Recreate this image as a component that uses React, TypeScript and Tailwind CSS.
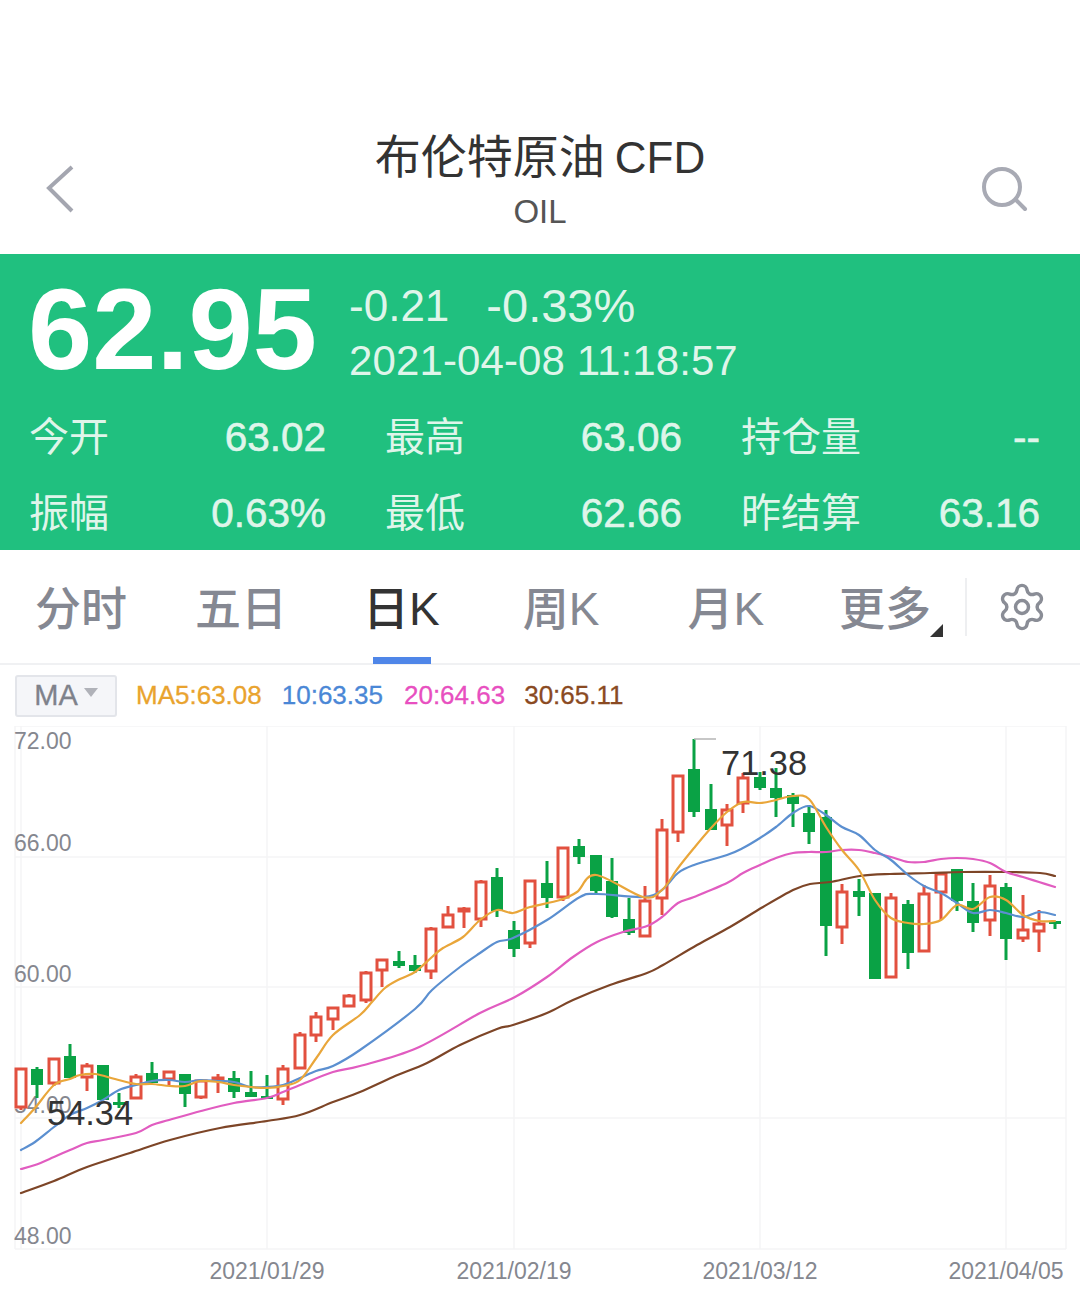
import { Settings } from "lucide-react";

type Candle = [number, number, number, number, number];

// x, body top, body bottom, wick top, wick bottom
const redCandles: Candle[] = [
  [21, 1069, 1107, 1068, 1110], [54, 1059, 1083, 1059, 1086], [87, 1066, 1077, 1063, 1091],
  [136, 1077, 1098, 1074, 1099], [169, 1072, 1079, 1072, 1086], [201, 1081, 1097, 1081, 1099],
  [218, 1078, 1080, 1074, 1093], [283, 1069, 1099, 1065, 1105], [300, 1035, 1068, 1032, 1068],
  [316, 1017, 1035, 1012, 1042], [333, 1008, 1019, 1008, 1030], [349, 996, 1006, 994, 1007],
  [366, 973, 1000, 971, 1003], [382, 960, 970, 960, 987], [431, 929, 971, 927, 979],
  [448, 915, 927, 906, 927], [464, 909, 911, 907, 928], [481, 882, 919, 880, 927],
  [530, 881, 943, 880, 948], [563, 848, 897, 848, 901], [645, 901, 936, 886, 936],
  [662, 830, 898, 819, 915], [678, 776, 832, 776, 842], [727, 810, 825, 804, 846],
  [743, 778, 803, 773, 813], [842, 892, 927, 884, 944], [891, 898, 977, 893, 977],
  [924, 894, 951, 885, 951], [941, 874, 892, 872, 920], [990, 886, 920, 875, 936],
  [1023, 930, 938, 895, 942], [1039, 924, 931, 910, 952],
];

const greenCandles: Candle[] = [
  [37, 1069, 1085, 1067, 1098], [70, 1056, 1078, 1044, 1078], [103, 1065, 1100, 1065, 1100],
  [119, 1102, 1104, 1093, 1108], [152, 1073, 1083, 1062, 1083], [185, 1074, 1094, 1074, 1107],
  [234, 1078, 1092, 1071, 1098], [251, 1092, 1097, 1071, 1097], [267, 1096, 1097, 1075, 1098],
  [399, 961, 966, 951, 968], [415, 965, 971, 955, 973], [497, 877, 911, 868, 917],
  [514, 930, 949, 921, 957], [547, 883, 898, 861, 908], [579, 846, 857, 839, 864],
  [596, 855, 891, 855, 894], [612, 881, 917, 858, 918], [629, 919, 933, 898, 935],
  [694, 769, 812, 739, 817], [711, 809, 830, 784, 830], [760, 777, 788, 772, 790],
  [776, 788, 798, 768, 817], [793, 795, 804, 793, 827], [809, 813, 832, 805, 844],
  [826, 817, 926, 810, 956], [859, 891, 897, 879, 916], [875, 893, 979, 893, 979],
  [908, 904, 953, 900, 969], [957, 869, 901, 869, 911], [973, 901, 923, 883, 932],
  [1006, 887, 939, 883, 960], [1055, 921, 923, 921, 929],
];

const ma5 = "21,1123 35,1108 54,1085 70,1079 80,1075 95,1074 115,1079 136,1084 152,1084 170,1086 185,1086 200,1081 218,1082 234,1085 251,1087 267,1088 283,1086 300,1080 317,1057 333,1035 360,1015 372,1002 385,988 400,979 415,972 432,957 443,948 463,937 480,920 497,910 513,913 530,907 560,900 577,892 596,875 643,897 662,890 678,868 694,848 711,828 727,812 743,802 760,803 776,800 793,796 809,799 826,827 842,850 859,870 875,900 891,918 908,923 924,924 941,920 957,905 973,909 990,897 1006,900 1023,915 1039,921 1055,921";
const ma10 = "21,1150 35,1142 54,1127 70,1115 87,1108 103,1100 119,1090 136,1085 152,1081 169,1080 185,1082 201,1080 218,1081 234,1082 251,1087 267,1087 283,1085 300,1078 316,1071 333,1066 360,1050 415,1009 432,990 460,967 480,953 497,942 513,938 547,920 580,897 597,894 643,897 662,890 678,873 694,865 727,855 743,848 760,838 776,827 793,813 809,806 826,815 842,827 859,835 875,850 891,860 908,875 924,886 941,893 957,903 973,913 990,910 1006,913 1023,917 1039,912 1055,915";
const ma20 = "21,1169 35,1165 54,1157 70,1150 87,1143 103,1140 136,1133 152,1125 169,1120 201,1111 234,1103 267,1098 283,1092 300,1085 333,1072 360,1066 417,1048 480,1013 515,997 547,977 573,957 597,942 623,932 647,926 662,917 678,903 694,897 727,883 743,873 760,865 776,858 793,853 809,852 826,852 842,850 859,850 875,853 891,857 908,862 924,862 941,859 957,858 973,859 990,863 1006,872 1023,877 1039,882 1055,887";
const ma30 = "21,1193 54,1181 87,1167 130,1153 170,1140 220,1128 267,1121 300,1115 333,1102 360,1092 393,1077 427,1063 460,1045 497,1029 513,1025 547,1013 573,1000 610,985 647,973 663,965 697,945 730,927 763,907 793,890 810,884 830,882 860,876 890,874 930,873 963,872 1007,872 1040,873 1055,876";

// catmull-rom through the sampled points, the source chart draws smoothed lines
const smoothPath = (points: string) => {
  const p = points.split(" ").map((pt) => pt.split(",").map(Number));
  let d = `M${p[0][0]} ${p[0][1]}`;
  for (let i = 0; i < p.length - 1; i++) {
    const a = p[Math.max(i - 1, 0)];
    const b = p[i];
    const c = p[i + 1];
    const e = p[Math.min(i + 2, p.length - 1)];
    const c1x = b[0] + (c[0] - a[0]) / 6;
    const c1y = b[1] + (c[1] - a[1]) / 6;
    const c2x = c[0] - (e[0] - b[0]) / 6;
    const c2y = c[1] - (e[1] - b[1]) / 6;
    d += ` C${c1x} ${c1y} ${c2x} ${c2y} ${c[0]} ${c[1]}`;
  }
  return d;
};

const stats = [
  ["今开", "63.02"], ["最高", "63.06"], ["持仓量", "--"],
  ["振幅", "0.63%"], ["最低", "62.66"], ["昨结算", "63.16"],
];

const StockChart = () => (
  <svg viewBox="0 726 1080 572" className="block h-[572px] w-[1080px]">
    <g stroke="#f4f4f6" strokeWidth="1.5" fill="none">
      {[726, 857, 987, 1118, 1249].map((y) => (
        <line key={y} x1="15" x2="1066" y1={y} y2={y} />
      ))}
      {[15, 21, 267, 514, 760, 1006, 1066].map((x) => (
        <line key={x} x1={x} x2={x} y1="726" y2="1249" />
      ))}
    </g>
    <g fill="#85878f" fontSize="23">
      <text x="14" y="749">72.00</text>
      <text x="14" y="851">66.00</text>
      <text x="14" y="982">60.00</text>
      <text x="14" y="1113">54.00</text>
      <text x="14" y="1244">48.00</text>
      <text x="267" y="1279" textAnchor="middle">2021/01/29</text>
      <text x="514" y="1279" textAnchor="middle">2021/02/19</text>
      <text x="760" y="1279" textAnchor="middle">2021/03/12</text>
      <text x="1006" y="1279" textAnchor="middle">2021/04/05</text>
    </g>
    {redCandles.map(([x, top, bottom, wickTop, wickBottom]) => (
      <g key={x} stroke="#e2503f" strokeWidth="3">
        <line x1={x} x2={x} y1={wickTop} y2={top} />
        <line x1={x} x2={x} y1={bottom} y2={wickBottom} />
        <rect x={x - 5} y={top} width="10" height={bottom - top} fill="#fff" />
      </g>
    ))}
    {greenCandles.map(([x, top, bottom, wickTop, wickBottom]) => (
      <g key={x} fill="#0aa245">
        <rect x={x - 1.5} y={wickTop} width="3" height={wickBottom - wickTop} />
        <rect x={x - 6} y={top} width="12" height={Math.max(bottom - top, 3)} />
      </g>
    ))}
    <g fill="none" strokeWidth="2.2" strokeLinejoin="round" strokeLinecap="round">
      <path d={smoothPath(ma30)} stroke="#7d4527" />
      <path d={smoothPath(ma20)} stroke="#e15cc0" />
      <path d={smoothPath(ma10)} stroke="#5b8fd0" />
      <path d={smoothPath(ma5)} stroke="#e9a63a" />
    </g>
    <line x1="694" x2="716" y1="739" y2="739" stroke="#b5b5b5" strokeWidth="1.5" />
    <g fill="#333" fontSize="34.4">
      <text x="721" y="775">71.38</text>
      <text x="47" y="1125">54.34</text>
    </g>
  </svg>
);

export default function App() {
  return (
    <div className="w-[1080px] h-[1298px] overflow-hidden bg-white [font-family:'Liberation_Sans','Noto_Sans_CJK_SC',sans-serif]">
      {/* title bar */}
      <div className="h-[254px] pt-[127px] grid grid-cols-[1fr_auto_1fr]">
        <div className="pl-[45px] pt-[38px]">
          <svg width="30" height="48" viewBox="0 0 30 48" fill="none" stroke="#a4a6b0" strokeWidth="4">
            <path d="M27 2 L4 23 L27 46" />
          </svg>
        </div>
        <div className="flex flex-col items-center text-[#333]">
          <div className="text-[46px] leading-[60px]">
            布伦特原油<span className="ml-[10px] text-[44px]">CFD</span>
          </div>
          <div className="mt-[4px] text-[33px] leading-[40px] text-[#555]">OIL</div>
        </div>
        <div className="flex justify-end pr-[52px] pt-[40px]">
          <svg width="48" height="48" viewBox="0 0 48 48" fill="none" stroke="#a8aab4" strokeWidth="4" strokeLinecap="round">
            <circle cx="22" cy="20" r="18" />
            <path d="M36 33 L45 42" />
          </svg>
        </div>
      </div>

      {/* quote panel */}
      <div className="h-[296px] bg-[#20c07f] px-[30px] pt-[18px] text-[#dff5ea]">
        <div className="flex items-start">
          <div className="-ml-[2px] text-[115.5px] leading-[114px] font-bold text-white">62.95</div>
          <div className="ml-[32px] mt-[9px]">
            <div className="flex text-[44px] leading-[50px]">
              <span>-0.21</span>
              <span className="ml-[37px] text-[47px]">-0.33%</span>
            </div>
            <div className="mt-[5px] text-[42px] leading-[50px] tracking-[0.1px]">2021-04-08 11:18:57</div>
          </div>
        </div>
        <div className="mt-[26px] grid grid-cols-[296px_296px_298px] gap-x-[60px] gap-y-[26px]">
          {stats.map(([label, value]) => (
            <div key={label} className="flex justify-between text-[40.5px] leading-[50px]">
              <span className="-ml-[1px] text-[40px]">{label}</span>
              <span className="[-webkit-text-stroke:0.6px_#dff5ea]">{value}</span>
            </div>
          ))}
        </div>
      </div>

      {/* period tabs */}
      <div className="relative h-[115px] border-b-2 border-[#f0f1f3] flex items-start pt-[29px] pl-[35px] text-[46px] leading-[60px] font-medium text-[#858892]">
        <span>分时</span>
        <span className="ml-[68px]">五日</span>
        <span className="ml-[76px] text-[#333]">日K</span>
        <span className="ml-[83px]">周K</span>
        <span className="ml-[88px]">月K</span>
        <span className="ml-[75px]">更多</span>
        <span className="absolute left-[930px] top-[74px] border-l-[13px] border-b-[13px] border-l-transparent border-b-[#333]" />
        <span className="ml-[34px] mt-[-1px] w-[2px] h-[58px] bg-[#eeeff1]" />
        <Settings className="ml-[29px] mt-[2px] text-[#8a8d96]" size={52} strokeWidth={1.6} />
        <span className="absolute left-[373px] top-[107px] w-[58px] h-[7px] bg-[#4f86e8]" />
      </div>

      {/* indicator row */}
      <div className="h-[61px] flex items-center pl-[15px] text-[26px] [-webkit-text-stroke:0.3px]">
        <div className="w-[102px] h-[42px] flex items-center justify-center gap-[6px] rounded-[3px] border-2 border-[#e3e5ea] bg-[#f5f6f9] text-[29px] text-[#7f828b]">
          MA
          <span className="mb-[6px] border-x-[7px] border-t-[9px] border-x-transparent border-t-[#b0b2b9]" />
        </div>
        <span className="ml-[19px] text-[#e9a32e]">MA5:63.08</span>
        <span className="ml-[20px] text-[#4a87d6]">10:63.35</span>
        <span className="ml-[21px] text-[#e84fc0]">20:64.63</span>
        <span className="ml-[19px] text-[#8a4a22]">30:65.11</span>
      </div>

      <StockChart />
    </div>
  );
}
